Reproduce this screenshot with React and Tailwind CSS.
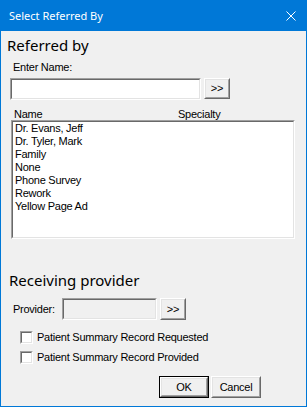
import React from 'react';

const items = ['Dr. Evans, Jeff', 'Dr. Tyler, Mark', 'Family', 'None', 'Phone Survey', 'Rework', 'Yellow Page Ad'];

// classic 3D sunken frame
const Sunken = ({ className = '', inner = 'bg-white', children }) => (
  <div className={`border border-t-[#a0a0a0] border-l-[#a0a0a0] border-r-white border-b-white ${className}`}>
    <div className={`h-full w-full border border-t-[#696969] border-l-[#696969] border-r-[#e3e3e3] border-b-[#e3e3e3] ${inner}`}>
      {children}
    </div>
  </div>
);

const Button = ({ className = '', children, isDefault }) => {
  const raised = (
    <div className="h-full w-full border border-t-white border-l-white border-r-[#696969] border-b-[#696969]">
      <div className="h-full w-full border border-t-[#e3e3e3] border-l-[#e3e3e3] border-r-[#a0a0a0] border-b-[#a0a0a0] flex items-center justify-center">
        {children}
      </div>
    </div>
  );
  if (isDefault) {
    return <div className={`border border-black bg-[#f0f0f0] ${className}`}>{raised}</div>;
  }
  return <div className={`bg-[#f0f0f0] ${className}`}>{raised}</div>;
};

const Checkbox = ({ label }) => (
  <div className="flex items-center h-[13px] pl-[19px]">
    <Sunken className="w-[13px] h-[13px] shrink-0" />
    <span className="ml-[4px]">{label}</span>
  </div>
);

export default function App() {
  return (
    <div className="w-[307px] h-[407px] flex flex-col text-[11px] leading-[13px] tracking-[-0.25px] text-black" style={{ fontFamily: '"Liberation Sans", Arial, sans-serif' }}>
      {/* Title bar */}
      <div className="h-[31px] bg-[#0078d7] flex items-center justify-between shrink-0">
        <span className="pl-[9px] text-white text-[11px] tracking-normal" style={{ fontFamily: '"Noto Sans", sans-serif' }}>Select Referred By</span>
        <svg width="10" height="10" viewBox="0 0 10 10" className="mr-[11px]">
          <path d="M0.5 0.5 L9.5 9.5 M9.5 0.5 L0.5 9.5" stroke="white" strokeWidth="1" />
        </svg>
      </div>

      <div className="flex-1 bg-[#f0f0f0] border-x border-b border-[#0078d7] pt-[4px] flex flex-col">
        <div className="pl-[6px] text-[15px] leading-[20px] tracking-normal" style={{ fontFamily: '"Noto Sans", sans-serif' }}>Referred by</div>

        <div className="pl-[12px] mt-[6px]">Enter Name:</div>

        <div className="flex mt-[4px] pl-[9px] gap-[3px]">
          <Sunken className="w-[191px] h-[22px]" />
          <Button className="w-[26px] h-[21px]">&gt;&gt;</Button>
        </div>

        <div className="flex h-[12px] leading-[12px] mt-[8px]">
          <span className="pl-[13px] w-[177px]">Name</span>
          <span>Specialty</span>
        </div>

        <Sunken className="ml-[10px] w-[284px] h-[119px]">
          <div className="pl-[2px]">
            {items.map((it) => (
              <div key={it} className="h-[13px]">{it}</div>
            ))}
          </div>
        </Sunken>

        <div className="pl-[8px] mt-[31px] text-[15px] leading-[20px] tracking-normal" style={{ fontFamily: '"Noto Sans", sans-serif' }}>Receiving provider</div>

        <div className="flex items-center mt-[8px] pl-[12px] h-[22px]">
          <span className="w-[49px]">Provider:</span>
          <Sunken className="w-[95px] h-[22px]" inner="bg-[#f0f0f0]" />
          <Button className="w-[26px] h-[22px] ml-[3px]">&gt;&gt;</Button>
        </div>

        <div className="mt-[11px]">
          <Checkbox label="Patient Summary Record Requested" />
        </div>
        <div className="mt-[7px]">
          <Checkbox label="Patient Summary Record Provided" />
        </div>

        <div className="flex mt-[12px] pl-[158px] gap-[2px]">
          <Button isDefault className="w-[50px] h-[22px]">OK</Button>
          <Button className="w-[50px] h-[22px]">Cancel</Button>
        </div>
      </div>
    </div>
  );
}
